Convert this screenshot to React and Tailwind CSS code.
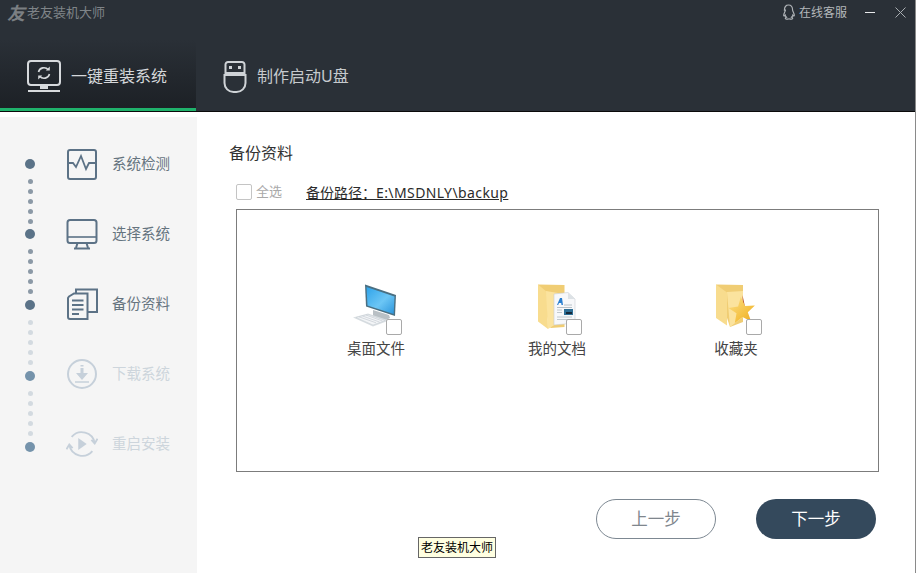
import React from "react";

const FONT = { fontFamily: '"Noto Sans", "Noto Sans CJK SC", sans-serif' };

function MonitorSync() {
  return (
    <svg width="36" height="32" viewBox="0 0 36 32" fill="none" stroke="#d7dadd" strokeWidth="2">
      <rect x="2" y="1" width="32" height="24" rx="3" />
      <path d="M3 31h32" transform="translate(-1 0)" strokeWidth="2" />
      <path d="M14 26h8v3h-8z" fill="#d7dadd" stroke="none" />
      <path d="M12.500 12a5.600 5.600 0 0 1 9.800-2.200M23.500 14a5.600 5.600 0 0 1-9.800 2.200" strokeWidth="1.600" />
      <path d="M23.800 6.600v4h-4zM12.200 19.400v-4h4z" fill="#d7dadd" stroke="none" />
    </svg>
  );
}

function UsbIcon() {
  return (
    <svg width="24" height="32" viewBox="0 0 24 32" fill="none">
      <path d="M2.500 14V3.500a2.500 2.500 0 0 1 2.500-2.500h14a2.500 2.500 0 0 1 2.500 2.500V14z" stroke="#cfd3d7" strokeWidth="2" fill="none" />
      <path d="M1.500 14h21v8a9 9 0 0 1-9 9h-3a9 9 0 0 1-9-9z" stroke="#cfd3d7" strokeWidth="2" fill="none" />
      <path d="M2.500 11h19v4h-19z" fill="#cfd3d7" />
      <rect x="6" y="5" width="3" height="3" fill="#cfd3d7" />
      <rect x="15" y="5" width="3" height="3" fill="#cfd3d7" />
    </svg>
  );
}

function QQ() {
  return (
    <svg width="15" height="16" viewBox="0 0 15 16" fill="none" stroke="#aeb2b6" strokeWidth="1.200">
      <path d="M3.400 6.200C3.400 3 5.100 1 7.500 1s4.100 2 4.100 5.200c0 1 1.900 3.400 1.700 5.200-.1.800-.8.600-1.500-.3-.2 1-.7 1.700-1.300 2.200.8.300 1.300.7 1.200 1.200-.1.600-2 .8-3 .5-.5-.2-.8-.2-1.400 0-1 .3-2.900.1-3-.5-.1-.5.400-.9 1.200-1.200-.6-.5-1.100-1.200-1.300-2.200-.7.900-1.400 1.100-1.500.3-.2-1.800 1.700-4.200 1.700-5.200z" />
    </svg>
  );
}

const ACTIVE = "#5c7286";
const DIS = "#c6d0da";

function StepDetect() {
  return (
    <svg width="32" height="32" viewBox="0 0 32 32" fill="none" stroke={ACTIVE} strokeWidth="2">
      <rect x="2" y="2" width="28" height="29" rx="2" />
      <path d="M2 15h5l3 4 5-11 5 13 3-6h7" strokeWidth="1.800" />
    </svg>
  );
}
function StepSystem() {
  return (
    <svg width="32" height="32" viewBox="0 0 32 32" fill="none" stroke={ACTIVE} strokeWidth="2">
      <rect x="1.500" y="2" width="29" height="23" rx="2.500" />
      <path d="M2 19h28" strokeWidth="1.600" />
      <path d="M11.500 25l-1.500 5M20.500 25l1.500 5" />
      <path d="M8 30.500h16" />
    </svg>
  );
}
function StepBackup() {
  return (
    <svg width="32" height="32" viewBox="0 0 32 32" fill="none" stroke={ACTIVE} strokeWidth="2">
      <path d="M10 5V1.500h21V24h-9" />
      <path d="M3 8.500l5-3h13.500V31H4a2 2 0 0 1-2-2V10z" fill="#f5f5f5" />
      <path d="M6 12.500h11.500M6 17h11.500M6 21.500h11.500M6 26h7" strokeWidth="1.800" />
    </svg>
  );
}
function StepDownload() {
  return (
    <svg width="32" height="32" viewBox="0 0 32 32" fill="none">
      <circle cx="16" cy="16" r="14" stroke={DIS} strokeWidth="2" />
      <path d="M14.500 7h3v1.500h-3zM14.500 10h3v5h4.500l-6 7-6-7h4.500z" fill={DIS} />
      <path d="M9 24h14" stroke={DIS} strokeWidth="1.500" />
    </svg>
  );
}
function StepRestart() {
  return (
    <svg width="34" height="32" viewBox="0 0 34 32" fill="none" stroke={DIS} strokeWidth="2">
      <path d="M6 8.500A14 14 0 0 1 30.500 15" />
      <path d="M28 23.500A14 14 0 0 1 3.500 17" />
      <path d="M27 11.500l3.500 4 3-5M7 20.500l-3.500-4-3 5" />
      <path d="M13 9.500l9 6.500-9 6.500z" fill={DIS} stroke="none" />
    </svg>
  );
}

function ComputerArt() {
  return (
    <svg width="80" height="63" viewBox="-4 0 80 63">
      <defs>
        <linearGradient id="scr" x1="0" y1="0" x2="1" y2="1">
          <stop offset="0" stopColor="#2ea3ea" />
          <stop offset="0.55" stopColor="#6cc6f5" />
          <stop offset="1" stopColor="#2b95dc" />
        </linearGradient>
      </defs>
      <path d="M25 9.500l31 10.500-1 21-29-9.500z" fill="#4a6f82" />
      <path d="M26.500 12l28 9.500-.8 17.500-26.200-8.500z" fill="url(#scr)" />
      <path d="M33 35l16 5 1 3-6 3-11-4z" fill="#b9c0c5" />
      <path d="M13 42.500l15-4 21 7-16 6z" fill="#d9dee2" />
      <path d="M16 42.500l12-3 17 6-12 4.500z" fill="#f3f5f7" stroke="#c5ccd2" strokeWidth="0.5" />
      <path d="M19 41.800l17 6M22.500 41l17 6M26 40l16.500 6" stroke="#c5ccd2" strokeWidth="0.7" />
    </svg>
  );
}

function DocFolderArt() {
  return (
    <svg width="80" height="63" viewBox="-3 0 80 63">
      <path d="M18 9.500l26.500.5v42l-14 1z" fill="#f0cd74" />
      <path d="M18 9.500l9 7.500 1 37-10-7.500z" fill="#f8dc8e" />
      <path d="M26 16l18 3v25l-16 10z" fill="#fbe39e" />
      <path d="M34 19l14-1.500 7 6.500v24l-21 2z" fill="#f7f8fa" stroke="#c9ced3" strokeWidth="0.6" />
      <path d="M48 17.500v6.500h7z" fill="#dde2e6" />
      <path d="M37 30l3-7h2l1 7h-1.500l-.3-2h-2.200l-.8 2z" fill="#2a7fd0" />
      <path d="M44 30h8M37 32.500h15" stroke="#a8b2ba" strokeWidth="0.8" />
      <rect x="44" y="34" width="9" height="6" fill="#2e6f96" />
      <rect x="46" y="37" width="6" height="2" fill="#16293a" />
      <path d="M37 35h5M37 37.500h5M37 42h15M37 44.500h13" stroke="#b4bcc3" strokeWidth="0.8" />
    </svg>
  );
}

function StarFolderArt() {
  return (
    <svg width="80" height="63" viewBox="-4 0 80 63">
      <defs>
        <linearGradient id="star" x1="0" y1="0" x2="1" y2="1">
          <stop offset="0" stopColor="#fbe08a" />
          <stop offset="0.6" stopColor="#f5c244" />
          <stop offset="1" stopColor="#e9a41f" />
        </linearGradient>
      </defs>
      <path d="M16 9.500l27 .5v37l-13 5z" fill="#f0cd74" />
      <path d="M16 9.500l11 8v33L16 43z" fill="#f8dc8e" />
      <path d="M27 17l16-1v26l-13 10z" fill="#fbe39e" />
      <path d="M42.500 20l2.500 12-2 2z" fill="#b44a22" />
      <path d="M40.800 22.100L45.100 30.900 54.900 30.500 47.800 37.300 51.200 46.600 42.500 42 34.800 48 36.500 38.300 28.400 32.900 38.100 31.500z" fill="url(#star)" />
    </svg>
  );
}

function Tick({ className }) {
  return <span className={"block w-4 h-4 bg-white border border-[#a9a9a9] rounded-[2px] " + (className || "")} />;
}

function Item({ art, label, className, tickClass }) {
  return (
    <div className={"relative w-[80px] flex flex-col items-center " + (className || "")}>
      {art}
      <span className="text-[14.5px] leading-[20px] text-[#444] whitespace-nowrap">{label}</span>
      <Tick className={"absolute top-[44px] " + tickClass} />
    </div>
  );
}

function Dots({ light, mb }) {
  return (
    <div className={"flex flex-col items-center gap-[5px] mt-[10px] " + mb}>
      {[0, 1, 2, 3, 4].map((i) => (
        <span key={i} className={"block w-[5px] h-[5px] rounded-full " + (light ? "bg-[#d3dae0]" : "bg-[#8b99a6]")} />
      ))}
    </div>
  );
}

function Big({ dim }) {
  return <span className={"block w-[10px] h-[10px] rounded-full " + (dim ? "bg-[#7593ab]" : "bg-[#5b7388]")} />;
}

function Step({ icon, label, off }) {
  return (
    <div className="h-[70px] flex items-center">
      <div className="w-[32px] h-[32px] mr-[14px] flex items-center">{icon}</div>
      <span className={"text-[14.5px] " + (off ? "text-[#cdd5dc]" : "text-[#65747f]")}>{label}</span>
    </div>
  );
}

export default function App() {
  return (
    <div className="relative w-[916px] h-[573px] flex flex-col overflow-hidden bg-white border-r border-[#8a8a8a]" style={FONT}>
      <header className="bg-[#2a3037] shrink-0">
        <div className="h-[40px] flex justify-between">
          <div className="flex items-start pl-[7px] pt-[3px]">
            <span className="w-[17px] text-[18px] leading-[20px] font-bold italic text-[#7b7f83]">友</span>
            <span className="ml-[3px] text-[13px] leading-[18px] text-[#7f8488]">老友装机大师</span>
          </div>
          <div className="flex items-start pt-[4px] pr-[9px]">
            <QQ />
            <span className="ml-[3px] text-[12px] leading-[17px] text-[#b4b8bb]">在线客服</span>
            <span className="ml-[18px] mt-[8px] block w-[10px] h-px bg-[#e8eaec]" />
            <svg className="ml-[20px] mt-[3px]" width="11" height="11" viewBox="0 0 11 11" stroke="#a8adb1" strokeWidth="1" fill="none">
              <path d="M.500.500l10 10M10.500.500l-10 10" />
            </svg>
          </div>
        </div>
        <div className="flex h-[71px]">
          <div className="w-[196px] h-full flex flex-col bg-gradient-to-b from-[#2a3037] to-[#1c2025]">
            <div className="flex-1 flex items-center pl-[26px] pt-[4px]">
              <MonitorSync />
              <span className="ml-[9px] text-[16px] text-[#d5d8db] whitespace-nowrap">一键重装系统</span>
            </div>
            <div className="h-[3px] bg-[#1fb26b]" />
          </div>
          <div className="flex items-center pl-[27px]">
            <div className="pt-[2px]"><UsbIcon /></div>
            <span className="ml-[10px] text-[16px] text-[#c6cacd] whitespace-nowrap">制作启动U盘</span>
          </div>
        </div>
        <div className="h-px bg-[#0a0a0a]" />
      </header>

      <div className="flex-1 flex min-h-0">
        <aside className="w-[197px] mt-[5px] bg-[#f5f5f5] flex shrink-0">
          <div className="w-[60px] pt-[42px] flex flex-col items-center shrink-0">
            <Big />
            <Dots mb="mb-[5px]" />
            <Big />
            <Dots mb="mb-[6px]" />
            <Big />
            <Dots light mb="mb-[6px]" />
            <Big dim />
            <Dots light mb="mb-[6px]" />
            <Big dim />
          </div>
          <div className="pl-[6px] pt-[12px] flex flex-col">
            <Step icon={<StepDetect />} label="系统检测" />
            <Step icon={<StepSystem />} label="选择系统" />
            <Step icon={<StepBackup />} label="备份资料" />
            <Step off icon={<StepDownload />} label="下载系统" />
            <Step off icon={<StepRestart />} label="重启安装" />
          </div>
        </aside>

        <main className="flex-1 pl-[32px] pr-[36px] flex flex-col min-w-0">
          <h1 className="mt-[29px] text-[16px] leading-[24px] font-normal text-[#333]">备份资料</h1>
          <div className="mt-[16px] ml-[7px] h-[22px] flex items-center">
            <Tick className="border-[#c4c4c4]" />
            <span className="ml-[4px] text-[13px] text-[#a9a9a9]">全选</span>
            <span className="ml-[24px] text-[14px] text-[#2b2b2b] underline">
              备份路径：<span className="tracking-[0.4px]">E:\MSDNLY\backup</span>
            </span>
          </div>
          <div className="mt-[6px] ml-[7px] h-[263px] border border-[#7c7c7c] pt-[65px] pl-[99px] flex items-start">
            <Item art={<ComputerArt />} label="桌面文件" tickClass="left-[50px]" />
            <Item art={<DocFolderArt />} label="我的文档" className="ml-[101px]" tickClass="left-[49px]" />
            <Item art={<StarFolderArt />} label="收藏夹" className="ml-[99px]" tickClass="left-[50px]" />
          </div>
          <div className="mt-[27px] pr-[3px] flex justify-end gap-[40px]">
            <button className="w-[120px] h-[40px] rounded-[20px] border border-[#7d8892] bg-white text-[16.5px] text-[#7f868d]">上一步</button>
            <button className="w-[120px] h-[40px] rounded-[20px] bg-[#34495c] text-[16.5px] text-white">下一步</button>
          </div>
        </main>
      </div>

      <div className="absolute left-[418px] top-[537px] w-[78px] h-[21px] bg-[#ffffe1] border border-[#666] text-[12px] leading-[19px] text-center text-black whitespace-nowrap">
        老友装机大师
      </div>
    </div>
  );
}
